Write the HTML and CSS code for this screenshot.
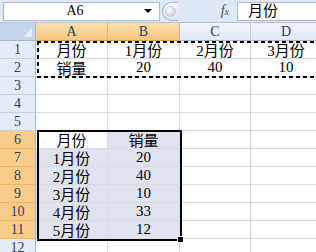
FILE: index.html
```html
<!DOCTYPE html>
<html lang="zh-CN">
<head>
  <meta charset="UTF-8" />
  <title>Sheet1</title>
  <link rel="stylesheet" href="styles.css">
</head>
<body>

  <div class="formula-bar">
    <div class="name-box">
      <span class="name">A6</span>
      <span class="arrow"></span>
    </div>
    <div class="grip"><span class="knob"></span></div>
    <div class="fx"><i>f</i><span>x</span></div>
    <div class="formula-input">月份</div>
  </div>

  <div class="sheet">
    <div class="corner"></div>
    <div class="col-head sel">A</div>
    <div class="col-head sel">B</div>
    <div class="col-head">C</div>
    <div class="col-head">D</div>

    <div class="row-head">1</div>
    <div class="cell">月份</div>
    <div class="cell">1月份</div>
    <div class="cell">2月份</div>
    <div class="cell">3月份</div>

    <div class="row-head">2</div>
    <div class="cell">销量</div>
    <div class="cell">20</div>
    <div class="cell">40</div>
    <div class="cell">10</div>

    <div class="row-head">3</div>
    <div class="cell"></div><div class="cell"></div><div class="cell"></div><div class="cell"></div>
    <div class="row-head">4</div>
    <div class="cell"></div><div class="cell"></div><div class="cell"></div><div class="cell"></div>
    <div class="row-head">5</div>
    <div class="cell"></div><div class="cell"></div><div class="cell"></div><div class="cell"></div>

    <div class="row-head sel">6</div>
    <div class="cell active">月份</div>
    <div class="cell picked">销量</div>
    <div class="cell"></div><div class="cell"></div>

    <div class="row-head sel">7</div>
    <div class="cell picked">1月份</div>
    <div class="cell picked">20</div>
    <div class="cell"></div><div class="cell"></div>

    <div class="row-head sel">8</div>
    <div class="cell picked">2月份</div>
    <div class="cell picked">40</div>
    <div class="cell"></div><div class="cell"></div>

    <div class="row-head sel">9</div>
    <div class="cell picked">3月份</div>
    <div class="cell picked">10</div>
    <div class="cell"></div><div class="cell"></div>

    <div class="row-head sel">10</div>
    <div class="cell picked">4月份</div>
    <div class="cell picked">33</div>
    <div class="cell"></div><div class="cell"></div>

    <div class="row-head sel">11</div>
    <div class="cell picked">5月份</div>
    <div class="cell picked">12</div>
    <div class="cell"></div><div class="cell"></div>

    <div class="row-head">12</div>
    <div class="cell"></div><div class="cell"></div><div class="cell"></div><div class="cell"></div>

    <!-- copy marquee around A1:D2 -->
    <div class="marquee"></div>
    <!-- selection A6:B11 -->
    <div class="selection"><span class="fill-handle"></span></div>
  </div>

</body>
</html>
```

FILE: styles.css
```css
body {
  margin: 0;
  width: 316px;
  height: 252px;
  overflow: hidden;
  background-color: #ffffff;
  color: #000000;
  font-family: "Liberation Serif", "Noto Sans CJK SC", serif;
}
.formula-bar {
  display: flex;
  align-items: center;
  height: 23px;
  padding-left: 3px;
  box-sizing: border-box;
  background-color: #dfe8f5;
  border-bottom: 1px solid #b3c3d8;
}
.name-box {
  display: flex;
  align-items: center;
  width: 157px;
  height: 19px;
  box-sizing: border-box;
  background-color: #ffffff;
  border: 1px solid #a9bbd3;
  font-size: 14px;
}
.name {
  flex: 1;
  text-align: center;
  padding-left: 2px;
}
.arrow {
  width: 0;
  height: 0;
  margin-right: 7px;
  border-left: 4px solid transparent;
  border-right: 4px solid transparent;
  border-top: 4px solid #000000;
}
.grip {
  display: flex;
  align-items: center;
  justify-content: center;
  width: 16px;
  height: 19px;
  margin-left: 2px;
  box-sizing: border-box;
  border: 1px solid #a9bbd3;
  border-right: none;
  border-radius: 10px 0 0 10px;
  background: linear-gradient(#f4f7fb, #d9e3f0);
}
.knob {
  width: 9px;
  height: 9px;
  border-radius: 50%;
  background: radial-gradient(circle at 35% 35%, #ffffff, #b9c4d2);
  border: 1px solid #c6cfdb;
}
.fx {
  width: 59px;
  text-align: right;
  padding-right: 8px;
  box-sizing: border-box;
  font-size: 14px;
  color: #3e4d60;
}
.fx i {
  font-family: "Liberation Serif", serif;
}
.fx span {
  font-size: 10px;
  font-style: italic;
}
.formula-input {
  flex: 1;
  height: 19px;
  box-sizing: border-box;
  background-color: #ffffff;
  border: 1px solid #a9bbd3;
  border-right: none;
  padding-left: 10px;
  font-size: 15px;
  line-height: 17px;
}
.sheet {
  position: relative;
  display: grid;
  grid-template-columns: 36px 72px 72px 71px 71px;
  grid-auto-rows: 18px;
  width: 322px;
}
.corner {
  position: relative;
  background-color: #c5d6ec;
  border-right: 1px solid #9eb6ce;
  border-bottom: 1px solid #9eb6ce;
}
.corner::after {
  content: "";
  position: absolute;
  right: 3px;
  bottom: 3px;
  border-left: 9px solid transparent;
  border-bottom: 9px solid #e8eff8;
}
.col-head {
  display: flex;
  align-items: center;
  justify-content: center;
  background: linear-gradient(#f1f5fb, #e1e9f5);
  border-right: 1px solid #c2d1e3;
  border-bottom: 1px solid #9eb6ce;
  font-size: 14px;
  color: #27415f;
}
.col-head.sel {
  background: linear-gradient(#fadfab, #f5c77e);
  border-right-color: #f2b85c;
  border-bottom-color: #d99c3c;
}
.row-head {
  display: flex;
  align-items: center;
  justify-content: center;
  background-color: #e4ecf7;
  border-right: 1px solid #9eb6ce;
  border-bottom: 1px solid #c5d3e4;
  font-size: 14px;
  color: #27415f;
}
.row-head.sel {
  background-color: #f8cd8a;
  border-bottom-color: #f1b660;
}
.cell {
  display: flex;
  align-items: center;
  justify-content: center;
  border-right: 1px solid #d6dce6;
  border-bottom: 1px solid #d6dce6;
  font-size: 15px;
}
.cell.picked {
  background-color: #dfe3ef;
}
.marquee {
  position: absolute;
  grid-column: 2 / 6;
  grid-row: 2 / 4;
  inset: 0 0 -1px 1px;
  background:
    repeating-linear-gradient(90deg, #000 0 4px, transparent 4px 7px) top / 100% 2px no-repeat,
    repeating-linear-gradient(90deg, #000 0 4px, transparent 4px 7px) bottom / 100% 2px no-repeat,
    repeating-linear-gradient(180deg, #000 0 4px, transparent 4px 7px) left / 2px 100% no-repeat;
}
.selection {
  position: absolute;
  grid-column: 2 / 4;
  grid-row: 7 / 13;
  inset: -1px -2px -2px 1px;
  border: 2px solid #000000;
}
.fill-handle {
  position: absolute;
  right: -4px;
  bottom: -4px;
  width: 5px;
  height: 5px;
  background-color: #000000;
  border: 1px solid #ffffff;
}
```
